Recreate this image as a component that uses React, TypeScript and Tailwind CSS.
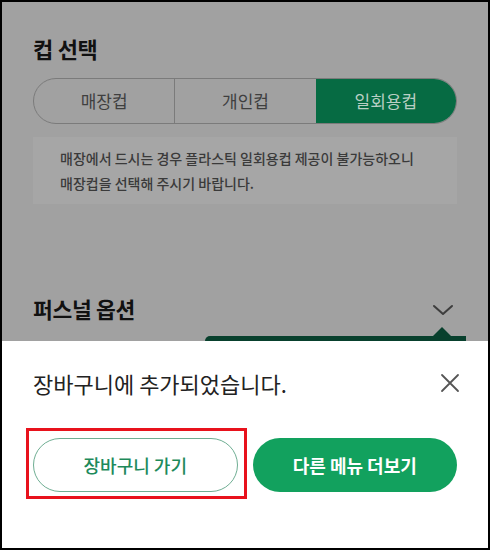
import React from "react";

const font = { fontFamily: '"Noto Sans CJK KR", "Noto Sans", sans-serif' };

function Chevron() {
  return (
    <svg width="22" height="14" viewBox="0 0 22 14" fill="none">
      <path d="M2 3l9 8 9-8" stroke="#3d3d3d" strokeWidth="2" strokeLinecap="round" strokeLinejoin="round" />
    </svg>
  );
}

function CloseIcon() {
  return (
    <svg width="20" height="20" viewBox="0 0 20 20" fill="none">
      <path d="M2 2l16 16M18 2L2 18" stroke="#555" strokeWidth="1.8" strokeLinecap="round" />
    </svg>
  );
}

export default function App() {
  return (
    <div
      className="w-[490px] h-[550px] border-2 border-black bg-white flex flex-col relative overflow-hidden"
      style={font}
    >
      {/* dimmed page behind the sheet */}
      <div className="h-[339px] bg-[#a1a1a1] px-[31px] pt-[32px] relative">
        <h2 className="text-[22px] font-bold text-[#111] leading-[28px] tracking-[-0.3px]">컵 선택</h2>

        <div className="mt-[16px] h-[46px] flex rounded-full border border-[#7b7b7b] overflow-hidden">
          <div className="flex-1 flex items-center justify-center text-[17px] text-[#3f3f3f] border-r border-[#7b7b7b]">
            매장컵
          </div>
          <div className="flex-1 flex items-center justify-center text-[17px] text-[#3f3f3f]">
            개인컵
          </div>
          <div className="flex-1 flex items-center justify-center text-[17px] text-[#b9cfc4] bg-[#066b43]">
            일회용컵
          </div>
        </div>

        <div className="mt-[13px] h-[67px] bg-[#a6a6a6] px-[27px] pt-[9px] text-[14px] leading-[25px] text-[#3a3a3a] font-medium">
          <p>매장에서 드시는 경우 플라스틱 일회용컵 제공이 불가능하오니</p>
          <p>매장컵을 선택해 주시기 바랍니다.</p>
        </div>

        <div className="mt-[89px] flex items-center justify-between">
          <h2 className="text-[21.5px] font-bold text-[#111] tracking-[-0.3px]">퍼스널 옵션</h2>
          <div className="mr-[3px] mt-[2px]">
            <Chevron />
          </div>
        </div>

        {/* tooltip peeking out under the sheet */}
        <div className="absolute left-[203px] right-[22px] bottom-0 h-[5px] bg-[#08402d] rounded-tl-full" />
        <div className="absolute left-[431px] bottom-[5px] w-0 h-0 border-l-[9px] border-r-[9px] border-b-[9px] border-l-transparent border-r-transparent border-b-[#08402d]" />
      </div>

      {/* bottom sheet */}
      <div className="flex-1 bg-white px-[31px] pt-[29px]">
        <div className="flex items-center justify-between">
          <p className="text-[22px] text-[#222] leading-[26px]">장바구니에 추가되었습니다.</p>
          <div className="mr-[-3px]">
            <CloseIcon />
          </div>
        </div>

        <div className="mt-[42px] flex gap-[15px]">
          <div className="relative flex-1">
            <div className="absolute -left-[7px] -right-[9px] -top-[10px] -bottom-[7px] border-[3px] border-[#e8121c]" />
            <button className="w-full h-[54px] rounded-full border border-[#6fae93] text-[18px] text-[#1e8a5b] font-medium">
              장바구니 가기
            </button>
          </div>
          <button className="flex-1 h-[54px] rounded-full bg-[#12a15e] text-[18px] text-white font-bold">
            다른 메뉴 더보기
          </button>
        </div>
      </div>
    </div>
  );
}
